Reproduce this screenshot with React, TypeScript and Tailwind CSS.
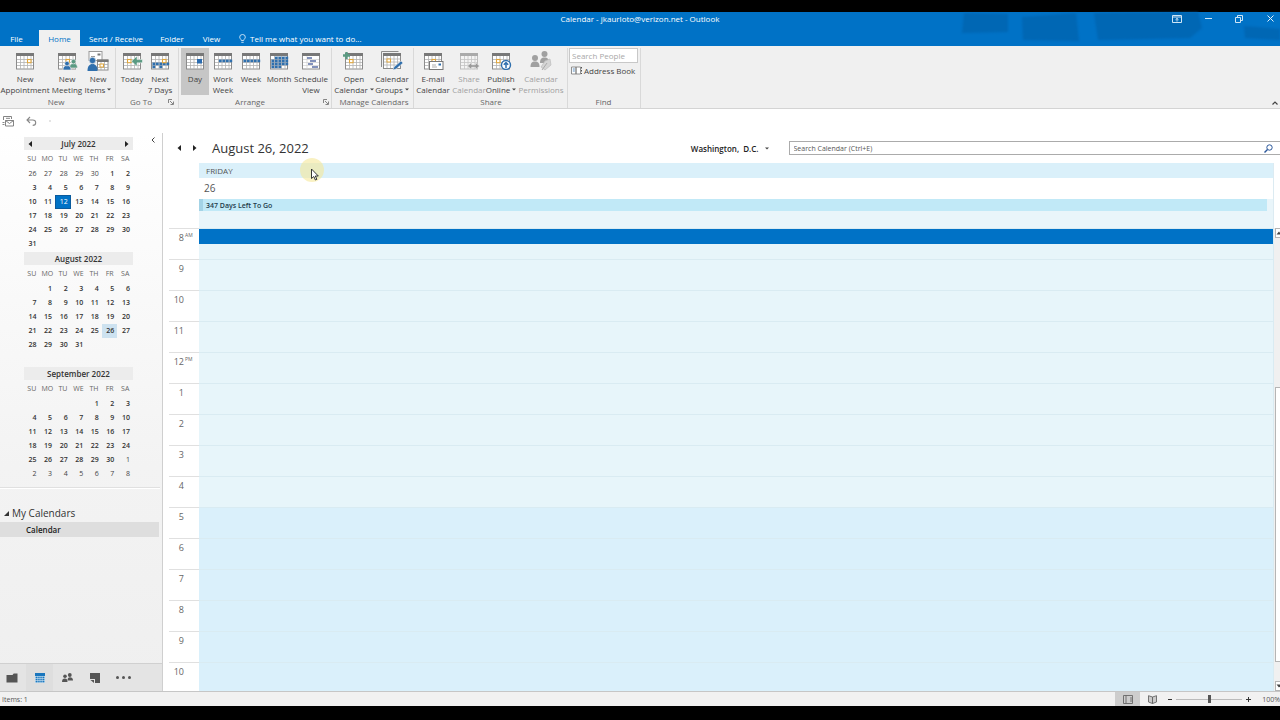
import { useState, type ReactNode } from "react";

type Cell = [col: number, row: number];

const BLUE = "#2f6fad";
const GRAY = "#787878";

// Calendar sheet used by almost every ribbon icon: 5 x 4 cells under a header bar
function Sheet({ fills = [], color = BLUE, today, muted, children }: {
  fills?: Cell[];
  color?: string;
  today?: Cell;
  muted?: boolean;
  children?: ReactNode;
}) {
  const line = muted ? "#c4c4c4" : "#b2b2b2";
  return (
    <svg className="h-[18px] w-[22px] shrink-0" viewBox="-2 0 22 18" aria-hidden="true">
      <rect x="0.5" y="1.5" width="17" height="15.5" fill={muted ? "#f4f4f4" : "#fff"} stroke={muted ? "#bdbdbd" : "#8c8c8c"} />
      <rect x="0" y="1" width="18" height="3" fill={muted ? "#aaa" : GRAY} />
      <path d="M4.5 4v13M8 4v13M11.5 4v13M15 4v13M1 7.5h16M1 10.5h16M1 13.5h16" stroke={line} strokeWidth="0.8" />
      {fills.map(([c, r]) => (
        <rect key={`${c}-${r}`} x={1.4 + c * 3.5} y={4.6 + r * 3} width="2.8" height="2.6" fill={color} />
      ))}
      {today && (
        <rect x={1 + today[0] * 3.5} y={4.5 + today[1] * 3} width="3.5" height="3.2" fill="#fff" stroke="#e0a63c" strokeWidth="1.1" />
      )}
      {children}
    </svg>
  );
}

function Person({ x, y, color }: { x: number; y: number; color: string }) {
  return (
    <g transform={`translate(${x} ${y})`} fill={color} stroke="#f0f0f0" strokeWidth="0.6">
      <path d="M0 9c0-3.2 1.5-4.5 4-4.5S8 5.8 8 9z" />
      <circle cx="4" cy="2.6" r="2.3" />
    </g>
  );
}

const icons: Record<string, ReactNode> = {
  appointment: <Sheet today={[3, 1]} />,
  meeting: (
    <Sheet today={[2, 1]}>
      <Person x={11.5} y={7} color="#5a9a82" />
      <Person x={5} y={9} color="#2f6fad" />
    </Sheet>
  ),
  items: (
    <svg className="h-[20px] w-[22px] shrink-0" viewBox="0 0 22 20" aria-hidden="true">
      <rect x="2" y="0.5" width="13" height="9" fill="#fff" stroke="#999" />
      <path d="M10.5 2.5h3v2h-3z" fill={GRAY} />
      <path d="M4 5.5h4" stroke="#999" />
      <rect x="10.5" y="9" width="10.5" height="10" fill="#fff" stroke="#8c8c8c" />
      <path d="M10 8.5h11.5v2.5H10z" fill={GRAY} />
      <path d="M14 11v8M17.5 11v8M11 13.5h10M11 16.5h10" stroke="#a9a9a9" strokeWidth="0.8" />
      <rect x="13" y="13" width="3.5" height="3" fill="#fff" stroke="#e0a63c" />
      <path d="M0.5 20c0-5 2-7 5-7s5 2 5 7z" fill={BLUE} />
      <circle cx="5.5" cy="9.5" r="3.2" fill={BLUE} stroke="#f0f0f0" strokeWidth="0.6" />
    </svg>
  ),
  today: (
    <Sheet today={[1, 1]}>
      <path d="M8.5 9.2L14 4v3.6h5.5v3.2H14v3.6z" fill="#5a9a82" stroke="#fff" strokeWidth="0.5" />
    </Sheet>
  ),
  next: <Sheet today={[3, 1]} fills={[[0, 2], [1, 2], [2, 2], [3, 2], [4, 2], [0, 3], [2, 3]]} />,
  day: (
    <Sheet>
      <rect x="11" y="7" width="5" height="4.5" fill="#2b6cb0" />
    </Sheet>
  ),
  workWeek: <Sheet fills={[[1, 1], [2, 1], [3, 1], [4, 1]]} />,
  week: <Sheet fills={[[0, 1], [1, 1], [2, 1], [3, 1], [4, 1]]} />,
  month: (
    <Sheet
      fills={[
        [1, 0], [2, 0], [3, 0], [4, 0],
        [0, 1], [1, 1], [2, 1], [3, 1], [4, 1],
        [0, 2], [1, 2], [2, 2], [3, 2], [4, 2],
        [0, 3], [1, 3], [2, 3],
      ]}
    />
  ),
  schedule: (
    <svg className="h-[18px] w-[22px] shrink-0" viewBox="-2 0 22 18" aria-hidden="true">
      <rect x="0.5" y="1.5" width="17" height="15.5" fill="#fff" stroke="#8c8c8c" />
      <path d="M0 1h18v3H0z" fill={GRAY} />
      <path d="M1 7.5h16M1 10.5h16M1 13.5h16M5 4v13" stroke="#d0d0d0" strokeWidth="0.7" />
      <path d="M5 6h5M8 9h6M6 12h5M10 15h6" stroke="#5b6fa5" strokeWidth="1.5" />
    </svg>
  ),
  open: (
    <Sheet today={[1, 1]}>
      <path d="M-2 3.5h7M1.5 0v7" stroke="#5a9a82" strokeWidth="2.4" />
    </Sheet>
  ),
  groups: (
    <svg className="h-[20px] w-[22px] shrink-0" viewBox="0 0 22 20" aria-hidden="true">
      <path d="M0.5 16V0.5h17" fill="none" stroke="#8c8c8c" />
      <rect x="2.5" y="2.5" width="17" height="15" fill="#fff" stroke="#8c8c8c" />
      <path d="M2 2h18v3H2z" fill={GRAY} />
      <path d="M6 5v12M9.5 5v12M13 5v12M16.5 5v12M3 8h16M3 11h16M3 14h16" stroke="#b2b2b2" strokeWidth="0.8" />
      <rect x="6" y="8" width="3.5" height="3" fill="#fff" stroke="#e0a63c" />
      <path d="M12 19l1-3 7-6 2 2-7 6z" fill={BLUE} stroke="#f0f0f0" strokeWidth="0.5" />
    </svg>
  ),
  email: (
    <Sheet today={[2, 1]}>
      <rect x="5.5" y="9.5" width="13.5" height="8" fill="#fff" stroke="#777" />
      <path d="M14.5 11.5h2.5v2h-2.5z" fill={BLUE} />
      <path d="M8 13h4M8 15h5" stroke="#999" strokeWidth="0.8" />
    </Sheet>
  ),
  share: (
    <Sheet muted>
      <path d="M7.5 14l4-3.5v2.3h4v-2.3l4 3.5-4 3.5v-2.3h-4v2.3z" fill="#9a9a9a" stroke="#f0f0f0" strokeWidth="0.5" />
    </Sheet>
  ),
  publish: (
    <Sheet today={[1, 1]}>
      <circle cx="14" cy="13" r="4.5" fill="#fff" stroke={BLUE} strokeWidth="1.4" />
      <path d="M14 16v-5M11.8 12.8L14 10.5l2.2 2.3" fill="none" stroke={BLUE} strokeWidth="1.5" />
    </Sheet>
  ),
  permissions: (
    <svg className="h-[20px] w-[22px] shrink-0" viewBox="0 0 22 20" aria-hidden="true">
      <g fill="#a0a0a0">
        <circle cx="14.5" cy="3" r="3" />
        <path d="M10 12c0-4 1.5-5.5 4.5-5.5S19 8 19 12z" />
        <circle cx="5" cy="7" r="3" />
        <path d="M0.5 16c0-4 1.5-5.5 4.5-5.5s4.5 1.5 4.5 5.5z" />
      </g>
      <path d="M15 10l5-2 1 6-6 5-4-3z" fill="#d5d5d5" stroke="#bbb" strokeWidth="0.7" />
      <path d="M12 19l5-7" stroke="#aaa" />
    </svg>
  ),
};

interface RibbonItem {
  icon: string;
  lines: string[];
  width: string;
  menu?: boolean;
  disabled?: boolean;
}

interface RibbonGroupData {
  name: string;
  pad: string;
  launcher?: boolean;
  items: RibbonItem[];
}

const ribbon: RibbonGroupData[] = [
  {
    name: "New",
    pad: "pl-px pr-1",
    items: [
      { icon: "appointment", lines: ["New", "Appointment"], width: "w-12" },
      { icon: "meeting", lines: ["New", "Meeting"], width: "w-9" },
      { icon: "items", lines: ["New", "Items"], width: "w-[26px]", menu: true },
    ],
  },
  {
    name: "Go To",
    pad: "pl-0.5 pr-1",
    launcher: true,
    items: [
      { icon: "today", lines: ["Today"], width: "w-7" },
      { icon: "next", lines: ["Next", "7 Days"], width: "w-7" },
    ],
  },
  {
    name: "Arrange",
    pad: "pl-0.5 pr-0.5",
    launcher: true,
    items: [
      { icon: "day", lines: ["Day"], width: "w-7" },
      { icon: "workWeek", lines: ["Work", "Week"], width: "w-7" },
      { icon: "week", lines: ["Week"], width: "w-7" },
      { icon: "month", lines: ["Month"], width: "w-7" },
      { icon: "schedule", lines: ["Schedule", "View"], width: "w-9" },
    ],
  },
  {
    name: "Manage Calendars",
    pad: "pl-1 pr-px",
    items: [
      { icon: "open", lines: ["Open", "Calendar"], width: "w-9", menu: true },
      { icon: "groups", lines: ["Calendar", "Groups"], width: "w-10", menu: true },
    ],
  },
  {
    name: "Share",
    pad: "pl-px",
    items: [
      { icon: "email", lines: ["E-mail", "Calendar"], width: "w-9" },
      { icon: "share", lines: ["Share", "Calendar"], width: "w-9", disabled: true },
      { icon: "publish", lines: ["Publish", "Online"], width: "w-7", menu: true },
      { icon: "permissions", lines: ["Calendar", "Permissions"], width: "w-[52px]", disabled: true },
    ],
  },
];

function Caret() {
  return (
    <svg className="h-[3px] w-[4px] shrink-0" viewBox="0 0 4 3" aria-hidden="true">
      <path d="M0 0.5h4L2 2.5z" fill="#444" />
    </svg>
  );
}

function RibbonButton({ item, active, onClick }: { item: RibbonItem; active: boolean; onClick?: () => void }) {
  return (
    <button
      type="button"
      disabled={item.disabled}
      onClick={onClick}
      className={`flex h-[47px] flex-col items-center ${item.width} ${active ? "bg-[#c6c6c6]" : ""} ${
        item.disabled ? "text-[#a0a0a0]" : "text-[#444]"
      }`}
    >
      <span className="flex h-[25px] items-center justify-center">{icons[item.icon]}</span>
      {item.lines.map((line, i) => (
        <span key={line} className="flex items-center gap-0.5 whitespace-nowrap leading-[11px]">
          {line}
          {item.menu && i === item.lines.length - 1 && <Caret />}
        </span>
      ))}
    </button>
  );
}

function GroupLabel({ name, launcher }: { name: string; launcher?: boolean }) {
  return (
    <div className={`flex h-[13px] items-center ${launcher ? "-ml-1" : ""}`}>
      <span className="flex-1 whitespace-nowrap text-center text-[#666]">{name}</span>
      {launcher && (
        <button type="button" aria-label={`${name} options`}>
          <svg className="size-[6px]" viewBox="0 0 6 6" fill="none" stroke="#777" aria-hidden="true">
            <path d="M0.5 4V0.5H4M2 2l3 3M5.5 2.5v3h-3" strokeWidth="0.9" />
          </svg>
        </button>
      )}
    </div>
  );
}

function Ribbon() {
  const [view, setView] = useState("day");
  return (
    <div className="flex h-[63px] border-b border-[#d4d4d4] bg-[#f0f0f0] pt-0.5">
      {ribbon.map((group) => (
        <div key={group.name} className={`border-r border-[#d9d9d9] ${group.pad}`}>
          <div className="flex">
            {group.items.map((item) => (
              <RibbonButton
                key={item.icon}
                item={item}
                active={view === item.icon}
                onClick={group.name === "Arrange" ? () => setView(item.icon) : undefined}
              />
            ))}
          </div>
          <GroupLabel name={group.name} launcher={group.launcher} />
        </div>
      ))}
      <div className="border-r border-[#d9d9d9] pl-px pr-0.5">
        <div className="h-[47px]">
          <input
            type="text"
            aria-label="Search People"
            placeholder="Search People"
            className="block h-[15px] w-[69px] border border-[#c8c8c8] bg-white px-0.5 placeholder:text-[#a8a8a8]"
          />
          <button type="button" className="flex h-[15px] items-center gap-0.5 pl-0.5 text-[#444]">
            <svg className="h-[9px] w-[11px]" viewBox="0 0 11 9" aria-hidden="true">
              <path d="M0.5 1H5v7H0.5zM5 1h4.5v7H5z" fill="#fff" stroke="#777" strokeWidth="0.8" />
              <path d="M1.8 3h2M1.8 5h2" stroke={BLUE} strokeWidth="0.8" />
              <path d="M10.5 1v1.5M10.5 4v1.5M10.5 7v1" stroke="#555" />
            </svg>
            <span className="whitespace-nowrap">Address Book</span>
          </button>
        </div>
        <GroupLabel name="Find" />
      </div>
      <button type="button" aria-label="Collapse ribbon" className="mb-0.5 ml-auto mr-0.5 self-end">
        <svg className="size-[6px]" viewBox="0 0 6 6" fill="none" stroke="#444" aria-hidden="true">
          <path d="M0.5 4.5L3 2l2.5 2.5" strokeWidth="1.2" />
        </svg>
      </button>
    </div>
  );
}

function TitleBar() {
  return (
    <header className="relative bg-[#0072c6] text-white">
      {/* faint brush strokes of the title bar background */}
      <svg className="absolute right-0 top-0 h-[32px] w-[320px] blur-[1px]" viewBox="0 0 320 32" aria-hidden="true">
        <path
          d="M4 1l44 1v18l-46 1zM62 5l54-4 3 28-56-1zM134 1l104-1 4 16-12 10-92 2zM284 14l36 3v11l-35-2z"
          fill="#0062ad"
          opacity="0.7"
        />
      </svg>
      <div className="relative grid h-[18px] grid-cols-[1fr_auto_1fr] items-start pt-px">
        <span />
        <h1>Calendar - jkaurloto@verizon.net - Outlook</h1>
        <div className="flex justify-end gap-[19px] pr-1">
          <button type="button" aria-label="Ribbon display options" className="flex h-[11px] w-3 items-center justify-center">
            <svg className="h-[8px] w-[10px]" viewBox="0 0 10 8" fill="none" stroke="#cfe6f7" aria-hidden="true">
              <path d="M0.5 0.5h9v7h-9zM0.5 2h9M5 6.5v-3M3.5 4.8L5 3.4l1.5 1.4" />
            </svg>
          </button>
          <button type="button" aria-label="Minimize" className="flex h-[11px] w-3 items-center justify-center">
            <span className="h-px w-[7px] bg-[#cfe6f7]" />
          </button>
          <button type="button" aria-label="Restore" className="flex h-[11px] w-3 items-center justify-center">
            <svg className="size-[8px]" viewBox="0 0 8 8" fill="none" stroke="#cfe6f7" aria-hidden="true">
              <path d="M0.5 2.5h5v5h-5zM2.5 2.5v-2h5v5h-2" />
            </svg>
          </button>
          <button type="button" aria-label="Close" className="flex h-[11px] w-3 items-center justify-center">
            <svg className="size-[7px]" viewBox="0 0 7 7" stroke="#e6f3fc" aria-hidden="true">
              <path d="M0.5 0.5l6 6M6.5 0.5l-6 6" />
            </svg>
          </button>
        </div>
      </div>
      <nav className="relative flex h-[16px]">
        <button type="button" className="w-[39px] pr-1.5">File</button>
        <button type="button" className="w-[41px] bg-[#f0f0f0] text-[#0072c6]">Home</button>
        <button type="button" className="w-[72px] whitespace-nowrap">Send / Receive</button>
        <button type="button" className="w-10">Folder</button>
        <button type="button" className="w-[39px]">View</button>
        <button type="button" className="flex items-center gap-1 whitespace-nowrap pl-2">
          <svg className="h-[9px] w-[7px]" viewBox="0 0 7 9" fill="none" stroke="#d6eafa" strokeWidth="0.9" aria-hidden="true">
            <path d="M2.3 6.5C2.3 5.2 0.7 4.8 0.7 3.1a2.8 2.6 0 0 1 5.6 0c0 1.7-1.6 2.1-1.6 3.4zM2.3 8.3h2.4" />
          </svg>
          Tell me what you want to do...
        </button>
      </nav>
    </header>
  );
}

function QuickAccess() {
  return (
    <div className="flex h-[24px] items-center gap-3 bg-white pl-0.5">
      <button type="button" aria-label="Send and receive all folders">
        <svg className="size-[12px]" viewBox="0 0 12 12" fill="none" stroke="#777" strokeWidth="0.9" aria-hidden="true">
          <path d="M1.5 5V1.5h8V4M3.5 5.5h8V11h-8zM3.5 5.5l4 3 4-3M0.5 7.5h2M0.5 9.5h2M4 3.3h4" />
        </svg>
      </button>
      <button type="button" aria-label="Undo">
        <svg className="h-[10px] w-[11px]" viewBox="0 0 11 10" fill="none" stroke="#888" strokeWidth="1.1" aria-hidden="true">
          <path d="M4 1L1 4l3 3M1.2 4h5.5a3 2.7 0 0 1 0 5.4" />
        </svg>
      </button>
      <span className="size-0.5 bg-[#e4e4e4]" />
    </div>
  );
}

interface MiniMonthData {
  title: string;
  offset: number; // blank or previous-month cells before the 1st
  prev: number[];
  days: number;
  next: number;
  selected?: number;
  today?: number;
}

const months: MiniMonthData[] = [
  { title: "July 2022", offset: 5, prev: [26, 27, 28, 29, 30], days: 31, next: 0, today: 12 },
  { title: "August 2022", offset: 1, prev: [], days: 31, next: 0, selected: 26 },
  { title: "September 2022", offset: 4, prev: [], days: 30, next: 8 },
];

const weekdays = ["SU", "MO", "TU", "WE", "TH", "FR", "SA"];

function ArrowButton({ dir, label }: { dir: "left" | "right"; label: string }) {
  return (
    <button type="button" aria-label={label}>
      <svg className="h-[6px] w-[4px]" viewBox="0 0 4 6" fill="#222" aria-hidden="true">
        <path d={dir === "left" ? "M4 0v6L0.5 3z" : "M0 0v6l3.5-3z"} />
      </svg>
    </button>
  );
}

function MiniMonth({ month, nav }: { month: MiniMonthData; nav?: boolean }) {
  const cells = Array.from({ length: 42 }, (_, i) => {
    if (i < month.offset) return { n: month.prev[i], out: true };
    const n = i - month.offset + 1;
    if (n <= month.days) return { n, out: false };
    return n - month.days <= month.next ? { n: n - month.days, out: true } : { n: undefined, out: true };
  });
  const weeks = Array.from({ length: 6 }, (_, w) => cells.slice(w * 7, w * 7 + 7));

  return (
    <section className="mb-px">
      <div className="flex h-[13px] items-center justify-between bg-[#ececec] px-1">
        {nav ? <ArrowButton dir="left" label="Previous month" /> : <span />}
        <h2 className="font-semibold text-[#333]">{month.title}</h2>
        {nav ? <ArrowButton dir="right" label="Next month" /> : <span />}
      </div>
      <table className="w-full table-fixed border-collapse text-right text-[7px]">
        <thead>
          <tr className="h-[17px] text-center text-[#666]">
            {weekdays.map((d) => (
              <th key={d} className="p-0 font-normal">{d}</th>
            ))}
          </tr>
        </thead>
        <tbody>
          {weeks.map((week, w) => (
            <tr key={w} className="h-[14px]">
              {week.map((c, i) => {
                let look = "font-semibold text-[#333]";
                if (c.out) look = "text-[#444]";
                else if (c.n === month.today) look = "bg-[#0072c6] text-white outline outline-1 -outline-offset-1 outline-[#0a5a9c]";
                else if (c.n === month.selected) look = "bg-[#cde2f0] font-semibold text-[#333]";
                return <td key={i} className={`p-0 pr-[3px] leading-[14px] ${look}`}>{c.n}</td>;
              })}
            </tr>
          ))}
        </tbody>
      </table>
    </section>
  );
}

function Sidebar() {
  return (
    <aside className="flex w-[163px] shrink-0 flex-col border-r border-[#cfcfcf] bg-linear-to-b from-white via-[#f3f3f3] via-60% to-[#efefef]">
      <div className="flex items-start pl-6 pt-1">
        <div className="w-[109px]">
          {months.map((m, i) => (
            <MiniMonth key={m.title} month={m} nav={i === 0} />
          ))}
        </div>
        <button type="button" aria-label="Minimize folder pane" className="ml-auto mr-[7px]">
          <svg className="h-[6px] w-[4px]" viewBox="0 0 4 6" fill="none" stroke="#444" aria-hidden="true">
            <path d="M3.5 0.5L1 3l2.5 2.5" />
          </svg>
        </button>
      </div>
      <div className="mr-0.5 mt-[5px] h-0.5 border-t border-[#e0e0e0] bg-white" />
      <div className="flex-1 pr-[3px] pt-[15px]">
        <button type="button" className="flex h-[18px] items-center gap-[3px] pl-1 text-[10px] text-[#333]">
          <svg className="size-[5px]" viewBox="0 0 5 5" fill="#333" aria-hidden="true">
            <path d="M5 0v5H0z" />
          </svg>
          My Calendars
        </button>
        <button type="button" className="block h-[15px] w-full bg-[#dedede] pl-[26px] text-left font-semibold text-[#222]">
          Calendar
        </button>
      </div>
      <nav className="flex h-[28px] items-center border-t border-[#d0d0d0] bg-[#e4e4e4]">
        <button type="button" aria-label="Mail" className="flex h-full w-[26px] items-center justify-center pr-0.5">
          <svg className="h-[10px] w-[12px]" viewBox="0 0 12 10" fill="#555" aria-hidden="true">
            <path d="M0.5 2h6l1.2-1.5h3.8v9h-11z" />
          </svg>
        </button>
        <button type="button" aria-label="Calendar" className="flex h-full w-[27px] items-center justify-center bg-[#dedede]">
          <svg className="size-[10px]" viewBox="0 0 10 10" aria-hidden="true">
            <path d="M0 0h10v10H0z" fill="#1a76bd" />
            <path d="M0 3.5h10M0 5.5h10M0 7.5h10M0 9.5h10M0.5 3v7M2.8 3v7M5 3v7M7.2 3v7M9.5 3v7" stroke="#d4e6f2" strokeWidth="0.6" />
          </svg>
        </button>
        <button type="button" aria-label="People" className="flex h-full w-7 items-center justify-center">
          <svg className="h-[9px] w-[11px]" viewBox="0 0 11 9" fill="#555" aria-hidden="true">
            <circle cx="7.8" cy="2" r="1.9" />
            <path d="M5.5 7.5C5.5 5 6.5 4.3 8 4.3s3 0.7 3 3.2z" />
            <circle cx="3" cy="3.3" r="1.8" />
            <path d="M0 9c0-2.6 1-3.6 2.8-3.6S5.5 6.4 5.5 9z" />
          </svg>
        </button>
        <button type="button" aria-label="Notes" className="flex h-full w-7 items-center justify-center">
          <svg className="size-[10px]" viewBox="0 0 10 10" fill="#555" aria-hidden="true">
            <path d="M0 0h10v10H5V6H0zM0.500 7H4v3z" />
          </svg>
        </button>
        <button type="button" aria-label="More" className="flex h-full w-7 items-center justify-center gap-[3px]">
          <span className="size-[3px] rounded-full bg-[#555]" />
          <span className="size-[3px] rounded-full bg-[#555]" />
          <span className="size-[3px] rounded-full bg-[#555]" />
        </button>
      </nav>
    </aside>
  );
}

const hours = [
  { label: "8", half: "AM" },
  { label: "9" },
  { label: "10" },
  { label: "11" },
  { label: "12", half: "PM" },
  { label: "1" },
  { label: "2" },
  { label: "3" },
  { label: "4" },
  { label: "5", off: true },
  { label: "6", off: true },
  { label: "7", off: true },
  { label: "8", off: true },
  { label: "9", off: true },
  { label: "10", off: true },
];

function DayView() {
  return (
    <main className="flex min-w-0 flex-1 flex-col bg-white">
      <div className="flex h-[30px] items-center">
        <div className="ml-3.5 flex items-center gap-3">
          <ArrowButton dir="left" label="Back" />
          <ArrowButton dir="right" label="Forward" />
        </div>
        <h2 className="ml-[15px] text-[13px] text-[#333]">August 26, 2022</h2>
        <button type="button" className="ml-auto flex items-center gap-1.5 whitespace-pre font-semibold text-[#222]">
          Washington,  D.C.
          <Caret />
        </button>
        <label className="ml-5 flex h-[14px] w-[44%] shrink-0 items-center border border-r-0 border-[#ababab] bg-white pl-1">
          <input
            type="text"
            aria-label="Search Calendar"
            placeholder="Search Calendar (Ctrl+E)"
            className="min-w-0 flex-1 text-[7px] outline-none placeholder:text-[#555]"
          />
          <svg className="mr-[7px] size-[9px]" viewBox="0 0 9 9" fill="none" stroke="#2b579a" aria-hidden="true">
            <circle cx="5.5" cy="3.5" r="2.7" />
            <path d="M3.5 5.5l-3 3" strokeWidth="1.4" />
          </svg>
        </label>
      </div>
      <div className="relative ml-9 mr-1.5 border-r border-[#dcebf2]">
        <div className="h-[15px] bg-[#daf0fa] pl-[7px] leading-[15px] text-[#555]">FRIDAY</div>
        <div className="h-[21px] pl-[5px] text-[10px] leading-[21px] text-[#555]">26</div>
        <div className="h-[29px] bg-[#e9f5fa] pr-1.5">
          <button type="button" className="block h-[12px] w-full border-l-4 border-[#a3d3e6] bg-[#c1e9f7] pl-[3px] text-left text-[7px] font-semibold leading-[11px] text-[#1f3b4a]">
            347 Days Left To Go
          </button>
        </div>
        {/* mouse pointer with its highlight disc */}
        <svg className="pointer-events-none absolute -top-1.5 left-[101px] size-[26px]" viewBox="0 0 26 26" aria-hidden="true">
          <circle cx="12" cy="13" r="12" fill="#f5e79a" opacity="0.6" />
          <path d="M11.5 12v9.5l2.3-2 1.6 3.5 1.5-0.7-1.6-3.3h3z" fill="#fff" stroke="#222" strokeWidth="0.9" />
        </svg>
      </div>
      <div className="flex min-h-0 flex-1">
        <div className="min-w-0 flex-1 overflow-hidden pl-1.5">
          {hours.map((h, i) => (
            <div key={i} className="flex h-[31px]">
              <div className="flex w-[30px] border-t border-[#e0e0e0] pt-0.5 text-[9px] leading-[13px] text-[#666]">
                <span className="w-[15px] text-right">{h.label}</span>
                <span className="pl-px text-[5px] leading-[8px]">{h.half}</span>
              </div>
              <div className={`flex-1 border-r border-t border-[#d9ebf2] ${h.off ? "bg-[#daf0fb]" : "bg-[#e7f5fa]"}`}>
                {i === 0 && <div className="h-[15px] bg-[#0072c6]" />}
              </div>
            </div>
          ))}
        </div>
        <div className="flex w-1.5 shrink-0 flex-col overflow-hidden bg-[#f0f0f0] pl-px">
          <button type="button" aria-label="Scroll up" className="flex h-[10px] items-center border border-r-0 border-[#b5b5b5] bg-white">
            <svg className="h-[4px] w-[6px] shrink-0" viewBox="0 0 6 4" fill="#444" aria-hidden="true">
              <path d="M0.5 3.5h5L3 0.5z" />
            </svg>
          </button>
          <div className="basis-[149px]" />
          <div className="flex-1 border border-r-0 border-[#b5b5b5] bg-white" />
          <div className="h-[19px]" />
          <button type="button" aria-label="Scroll down" className="flex h-[10px] items-center border border-r-0 border-[#b5b5b5] bg-white">
            <svg className="h-[4px] w-[6px] shrink-0" viewBox="0 0 6 4" fill="#444" aria-hidden="true">
              <path d="M0.5 0.5h5L3 3.5z" />
            </svg>
          </button>
        </div>
      </div>
    </main>
  );
}

function StatusBar() {
  return (
    <footer className="flex h-[15px] items-center overflow-hidden border-t border-[#c6c6c6] bg-[#f1f1f1] text-[7px] text-[#555]">
      <span className="pl-0.5">Items: 1</span>
      <button type="button" aria-label="Normal view" className="ml-auto flex h-full w-[25px] items-center justify-center bg-[#cdcdcd]">
        <svg className="h-[9px] w-[10px]" viewBox="0 0 10 9" fill="none" stroke="#666" strokeWidth="0.9" aria-hidden="true">
          <path d="M0.5 0.5h9v8h-9zM3 0.5v8M8 2v5" />
        </svg>
      </button>
      <button type="button" aria-label="Reading view" className="flex h-full w-[25px] items-center justify-center">
        <svg className="size-[9px]" viewBox="0 0 9 9" fill="#ccc" stroke="#666" strokeWidth="0.9" aria-hidden="true">
          <path d="M4.5 2v6.5L0.5 7V0.7zM4.5 2v6.5l4-1.5V0.7z" />
        </svg>
      </button>
      <button type="button" aria-label="Zoom out" className="flex h-full w-2.5 items-center justify-center">
        <span className="h-px w-1 bg-[#333]" />
      </button>
      <input
        type="range"
        aria-label="Zoom"
        min={10}
        max={190}
        defaultValue={100}
        className="mx-px h-[8px] w-[66px] appearance-none bg-[linear-gradient(#bbb,#bbb)] bg-size-[100%_1px] bg-center bg-no-repeat [&::-webkit-slider-thumb]:h-[8px] [&::-webkit-slider-thumb]:w-[3px] [&::-webkit-slider-thumb]:appearance-none [&::-webkit-slider-thumb]:bg-[#555]"
      />
      <button type="button" aria-label="Zoom in" className="flex h-full w-2.5 items-center justify-center">
        <svg className="size-[5px]" viewBox="0 0 5 5" stroke="#333" aria-hidden="true">
          <path d="M0 2.5h5M2.5 0v5" />
        </svg>
      </button>
      <span className="pl-[9px]">100%</span>
    </footer>
  );
}

export default function App() {
  return (
    <div className="flex h-screen flex-col overflow-hidden bg-black pb-3.5 pt-3 font-['Open_Sans',sans-serif] text-[8px] leading-[11px]">
      <TitleBar />
      <Ribbon />
      <QuickAccess />
      <div className="flex min-h-0 flex-1">
        <Sidebar />
        <DayView />
      </div>
      <StatusBar />
    </div>
  );
}
